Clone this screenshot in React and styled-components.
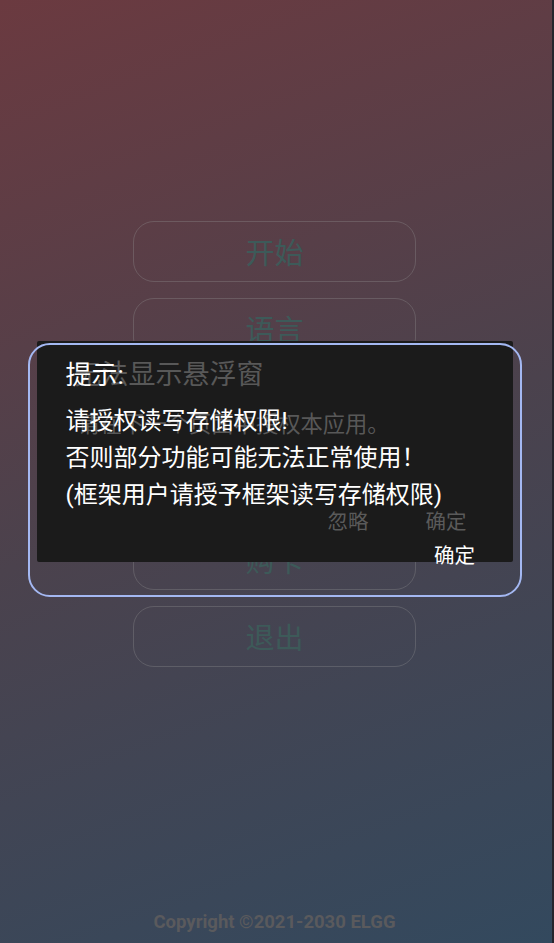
import React from "react";
import styled, { createGlobalStyle } from "styled-components";

const Global = createGlobalStyle`
  html, body { margin: 0; padding: 0; }
  body { font-family: "Roboto", "Noto Sans CJK SC", sans-serif; }
  * { box-sizing: border-box; }
`;

const Page = styled.div`
  position: relative;
  width: 554px;
  height: 943px;
  overflow: hidden;
  background: linear-gradient(160deg, #6b3a40 0%, #4b424d 50%, #33495e 100%);
  box-shadow: inset -2px 0 0 #25252d;
  display: flex;
  flex-direction: column;
  align-items: center;
  padding: 221px 5px 0 0;
`;

const Menu = styled.div`
  display: flex;
  flex-direction: column;
  gap: 16px;
`;

const MenuButton = styled.div`
  width: 283px;
  height: 61px;
  border: 1.5px solid rgba(150, 150, 150, 0.32);
  border-radius: 21px;
  display: flex;
  align-items: center;
  justify-content: center;
  color: #3d5a59;
  font-family: "Noto Sans CJK SC", sans-serif;
  font-size: 29px;
  line-height: 1;
`;

const Copyright = styled.div`
  margin-top: auto;
  padding-bottom: 10px;
  font-family: "Roboto", sans-serif;
  font-weight: 700;
  font-size: 18.5px;
  color: #5a5a5d;
`;

const Overlay = styled.div`
  position: absolute;
  inset: 0;
  display: flex;
  justify-content: center;
  align-items: flex-start;
  padding: ${(p) => p.$top}px 5px 0 0;
`;

const BackDialog = styled.div`
  width: 476px;
  height: 221px;
  background: #1b1b1b;
  border-radius: 2px;
  padding: 15px 46px 0 38px;
  display: flex;
  flex-direction: column;
  color: #585858;
  font-family: "Noto Sans CJK SC", sans-serif;
`;

const BackTitle = styled.div`
  font-size: 27px;
  line-height: 34px;
`;

const BackBody = styled.div`
  margin-top: 16px;
  padding-left: 3px;
  font-size: 22.3px;
  line-height: 32px;
`;

const BackActions = styled.div`
  margin-top: 68px;
  display: flex;
  justify-content: flex-end;
  gap: 57px;
`;

const ActionText = styled.span`
  font-family: "Noto Sans CJK SC", sans-serif;
  font-size: 20.5px;
  line-height: 28px;
  color: ${(p) => (p.$light ? "#ffffff" : "#5a5a5a")};
`;

const FrontDialog = styled.div`
  width: 494px;
  height: 254px;
  margin-left: 1px;
  border: 2px solid #a4b8f2;
  border-radius: 22px;
  background: transparent;
  padding: 13.5px 45px 0 35.5px;
  display: flex;
  flex-direction: column;
  color: #ffffff;
  font-family: "Roboto", "Noto Sans CJK SC", sans-serif;
`;

const FrontTitle = styled.div`
  font-size: 26px;
  line-height: 32px;
`;

const FrontBody = styled.div`
  margin-top: 12.5px;
  font-size: 24px;
  line-height: 37px;
`;

const FrontActions = styled.div`
  margin-top: 26px;
  display: flex;
  justify-content: flex-end;
`;

export default function App() {
  return (
    <>
      <Global />
      <Page>
        <Menu>
          <MenuButton>开始</MenuButton>
          <MenuButton>语言</MenuButton>
          <MenuButton>帮助</MenuButton>
          <MenuButton>关于</MenuButton>
          <MenuButton>购卡</MenuButton>
          <MenuButton>退出</MenuButton>
        </Menu>
        <Copyright>Copyright ©2021-2030 ELGG</Copyright>

        <Overlay $top={341}>
          <BackDialog>
            <BackTitle>无法显示悬浮窗</BackTitle>
            <BackBody>请在下一个页面中授权本应用。</BackBody>
            <BackActions>
              <ActionText>忽略</ActionText>
              <ActionText>确定</ActionText>
            </BackActions>
          </BackDialog>
        </Overlay>

        <Overlay $top={343}>
          <FrontDialog>
            <FrontTitle>提示:</FrontTitle>
            <FrontBody>
              <div>请授权读写存储权限!</div>
              <div>否则部分功能可能无法正常使用！</div>
              <div>(框架用户请授予框架读写存储权限)</div>
            </FrontBody>
            <FrontActions>
              <ActionText $light>确定</ActionText>
            </FrontActions>
          </FrontDialog>
        </Overlay>
      </Page>
    </>
  );
}
